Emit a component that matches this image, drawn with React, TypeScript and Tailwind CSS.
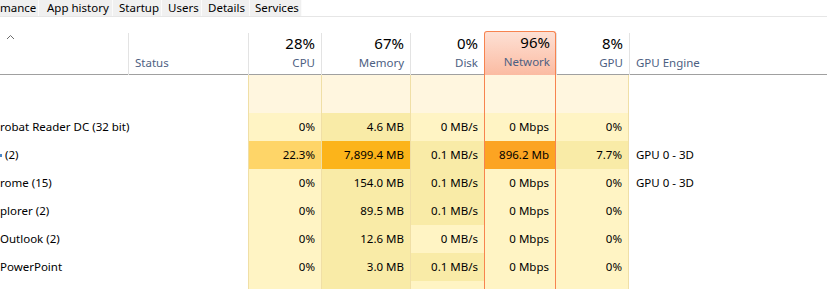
const font = { fontFamily: '"Segoe UI", "Noto Sans", "Open Sans", sans-serif' };

const cols = "grid grid-cols-[128px_120px_73px_89px_74px_72px_73px_1fr]";

const tabs = [
  { label: "mance", w: "w-[39px]", pl: "pl-0" },
  { label: "App history", w: "w-[74px]", pl: "pl-[8px]" },
  { label: "Startup", w: "w-[49px]", pl: "pl-[6px]" },
  { label: "Users", w: "w-[40px]", pl: "pl-[6px]" },
  { label: "Details", w: "w-[48px]", pl: "pl-[6px]" },
  { label: "Services", w: "w-[52px]", pl: "pl-[5px]" },
];

type Row = {
  name: string;
  dot?: boolean;
  cpu: string;
  mem: string;
  disk: string;
  net: string;
  gpu: string;
  engine: string;
  bg: [string, string, string, string, string];
};

const L = "bg-[#fff4c4]";
const M = "bg-[#f9eba7]";

const rows: Row[] = [
  { name: "robat Reader DC (32 bit)", cpu: "0%", mem: "4.6 MB", disk: "0 MB/s", net: "0 Mbps", gpu: "0%", engine: "", bg: [L, M, L, L, L] },
  { name: " (2)", dot: true, cpu: "22.3%", mem: "7,899.4 MB", disk: "0.1 MB/s", net: "896.2 Mb", gpu: "7.7%", engine: "GPU 0 - 3D", bg: ["bg-[#fed568]", "bg-[#fcb41a]", M, "bg-[#fca422]", M] },
  { name: "rome (15)", cpu: "0%", mem: "154.0 MB", disk: "0.1 MB/s", net: "0 Mbps", gpu: "0%", engine: "GPU 0 - 3D", bg: [L, M, M, L, L] },
  { name: "plorer (2)", cpu: "0%", mem: "89.5 MB", disk: "0.1 MB/s", net: "0 Mbps", gpu: "0%", engine: "", bg: [L, M, M, L, L] },
  { name: "Outlook (2)", cpu: "0%", mem: "12.6 MB", disk: "0 MB/s", net: "0 Mbps", gpu: "0%", engine: "", bg: [L, M, L, L, L] },
  { name: "PowerPoint", cpu: "0%", mem: "3.0 MB", disk: "0.1 MB/s", net: "0 Mbps", gpu: "0%", engine: "", bg: [L, M, M, L, L] },
  { name: "", cpu: "", mem: "", disk: "", net: "", gpu: "", engine: "", bg: [L, M, L, L, L] },
];

function HeadCell({ pct, label, net }: { pct: string; label: string; net?: boolean }) {
  if (net) {
    return (
      <div className="flex flex-col justify-end pt-[14px]">
        <div className="flex h-[44px] flex-col items-end rounded-t-[3px] border border-b-0 border-[#f7834f] bg-gradient-to-b from-[#fde0d4] to-[#fbbba2] pr-[5px]">
          <span className="text-[15px] leading-[20px] text-black">{pct}</span>
          <span className="mt-[2px] text-[11.5px] leading-[16px] text-[#4d6082]">{label}</span>
        </div>
      </div>
    );
  }
  return (
    <div className="mt-[16px] flex flex-col items-end border-l border-[#e3e3e3] pr-[6px]">
      <span className="text-[15px] leading-[20px] text-black">{pct}</span>
      <span className="mt-[2px] text-[11.5px] leading-[16px] text-[#4d6082]">{label}</span>
    </div>
  );
}

function Val({ v, bg, net }: { v: string; bg: string; net?: boolean }) {
  return (
    <div
      className={`flex h-[28px] items-center justify-end pr-[6px] text-[11.5px] text-black ${bg} ${
        net ? "border-x border-[#f7834f]" : "border-l border-[#f0dfa6]"
      }`}
    >
      {v}
    </div>
  );
}

export default function App() {
  return (
    <div className="h-[289px] w-[827px] overflow-hidden bg-white" style={font}>
      {/* tabs */}
      <div className="flex h-[17px] border-b border-[#e6e6e6]">
        {tabs.map((t) => (
          <div
            key={t.label}
            className={`${t.w} ${t.pl} flex h-[16px] items-center border-r border-[#fbfbfb] bg-[#f0f0f0] text-[11.5px] text-black`}
          >
            {t.label}
          </div>
        ))}
      </div>

      {/* header */}
      <div className={`${cols} h-[58px] border-b border-[#a0a0a0]`}>
        <div className="pl-[6px] pt-[17px]">
          <svg width="9" height="6" viewBox="0 0 9 6">
            <polyline points="1,5 4.5,1.5 8,5" fill="none" stroke="#6b6b6b" strokeWidth="1" />
          </svg>
        </div>
        <div className="mt-[16px] flex items-end border-l border-[#e3e3e3] pb-[4px] pl-[6px] text-[11.5px] leading-[16px] text-[#4d6082]">
          Status
        </div>
        <HeadCell pct="28%" label="CPU" />
        <HeadCell pct="67%" label="Memory" />
        <HeadCell pct="0%" label="Disk" />
        <HeadCell pct="96%" label="Network" net />
        <HeadCell pct="8%" label="GPU" />
        <div className="mt-[16px] flex items-end border-l border-[#e3e3e3] pb-[4px] pl-[6px] text-[11.5px] leading-[16px] text-[#4d6082]">
          GPU Engine
        </div>
      </div>

      {/* group spacer */}
      <div className={`${cols} h-[38px]`}>
        <div />
        <div />
        <div className="border-l border-[#f0dfa6] bg-[#fff6df]" />
        <div className="border-l border-[#f0dfa6] bg-[#fff6df]" />
        <div className="border-l border-[#f0dfa6] bg-[#fff6df]" />
        <div className="border-x border-[#f7834f] bg-[#fff6df]" />
        <div className="border-r border-[#f0dfa6] bg-[#fff6df]" />
        <div />
      </div>

      {rows.map((r, i) => (
        <div key={i} className={`${cols} h-[28px]`}>
          <div className="flex items-center whitespace-nowrap text-[11.5px] text-black">
            {r.dot && <span className="mr-[3px] h-[3px] w-[2px] bg-[#4a86c8]" />}
            {r.name}
          </div>
          <div />
          <Val v={r.cpu} bg={r.bg[0]} />
          <Val v={r.mem} bg={r.bg[1]} />
          <Val v={r.disk} bg={r.bg[2]} />
          <Val v={r.net} bg={r.bg[3]} net />
          <div
            className={`flex h-[28px] items-center justify-end border-r border-[#f0dfa6] pr-[6px] text-[11.5px] text-black ${r.bg[4]}`}
          >
            {r.gpu}
          </div>
          <div className="flex items-center pl-[7px] text-[11.5px] text-black">{r.engine}</div>
        </div>
      ))}
    </div>
  );
}
